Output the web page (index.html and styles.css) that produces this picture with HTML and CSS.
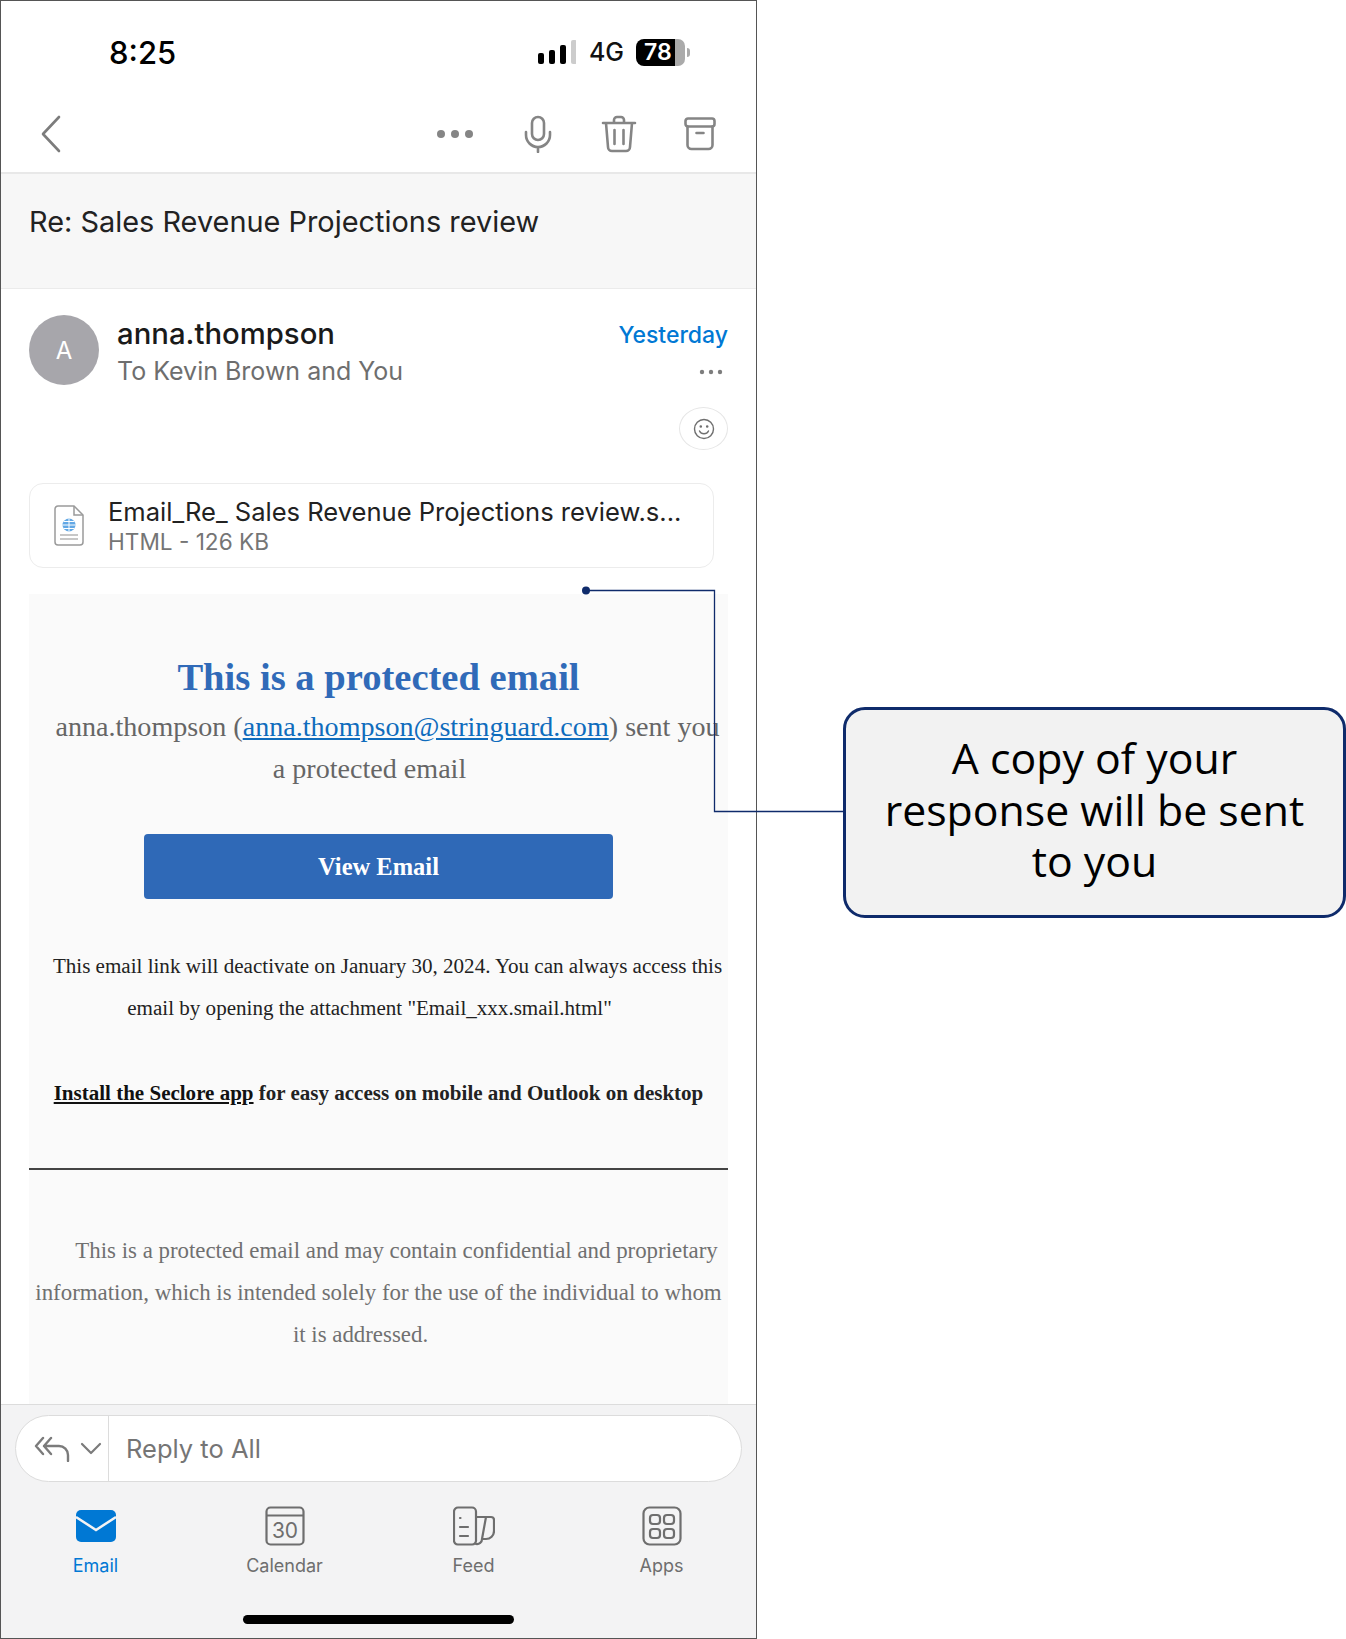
FILE: index.html
```html
<!DOCTYPE html>
<html lang="en">

<head>
  <meta charset="utf-8">
  <meta content="width=device-width, initial-scale=1.0" name="viewport">
  <title>Re: Sales Revenue Projections review</title>
  <link rel="stylesheet" href="styles.css">
</head>

<body>

  <div class="page">

    <!-- Phone screenshot -->
    <div class="phone">

      <div class="status-bar">
        <span class="time">8:25</span>
        <div class="status-right">
          <svg class="signal" width="38" height="24" viewBox="0 0 38 24">
            <rect x="0" y="13" width="6" height="11" rx="2" fill="#000"/>
            <rect x="11" y="10" width="6" height="14" rx="2" fill="#000"/>
            <rect x="22" y="5" width="6" height="19" rx="2" fill="#000"/>
            <rect x="33" y="0" width="6" height="24" rx="2" fill="#ccc"/>
          </svg>
          <span class="network">4G</span>
          <div class="battery">
            <span class="battery-level">78</span>
            <span class="battery-rest"></span>
            <span class="battery-nub"></span>
          </div>
        </div>
      </div>

      <div class="toolbar">
        <svg class="back" width="20" height="38" viewBox="0 0 20 38" fill="none" stroke="#7c7c7c" stroke-width="2.6" stroke-linecap="round" stroke-linejoin="round">
          <path d="M18 2 2 19l16 17"/>
        </svg>
        <div class="toolbar-actions">
          <svg width="38" height="10" viewBox="0 0 38 10" fill="#858585">
            <circle cx="5" cy="5" r="4"/><circle cx="19" cy="5" r="4"/><circle cx="33" cy="5" r="4"/>
          </svg>
          <svg width="28" height="38" viewBox="0 0 28 38" fill="none" stroke="#858585" stroke-width="2.6" stroke-linecap="round">
            <rect x="8" y="2" width="12" height="23" rx="6"/>
            <path d="M2 17v3a12 12 0 0 0 24 0v-3M14 32v5"/>
          </svg>
          <svg width="36" height="38" viewBox="0 0 36 38" fill="none" stroke="#858585" stroke-width="2.6" stroke-linecap="round" stroke-linejoin="round">
            <path d="M2 8h32M13 8V5a3 3 0 0 1 3-3h4a3 3 0 0 1 3 3v3M5 8l2 24a4 4 0 0 0 4 4h14a4 4 0 0 0 4-4l2-24M13.500 15v14M22.500 15v14"/>
          </svg>
          <svg width="32" height="34" viewBox="0 0 32 34" fill="none" stroke="#858585" stroke-width="2.6" stroke-linecap="round" stroke-linejoin="round">
            <rect x="1.500" y="1.500" width="29" height="8" rx="2.500"/>
            <path d="M3.500 9.500V28a4 4 0 0 0 4 4h17a4 4 0 0 0 4-4V9.500M12.500 16h7"/>
          </svg>
        </div>
      </div>

      <div class="subject">Re: Sales Revenue Projections review</div>

      <main class="mail">
        <div class="mail-head">
          <div class="avatar">A</div>
          <div class="sender">
            <div class="sender-name">anna.thompson</div>
            <div class="sender-to">To Kevin Brown and You</div>
          </div>
          <div class="mail-meta">
            <span class="mail-date">Yesterday</span>
            <svg class="mail-more" width="24" height="6" viewBox="0 0 24 6" fill="#7d7d7d">
              <circle cx="3" cy="3" r="2.200"/><circle cx="12" cy="3" r="2.200"/><circle cx="21" cy="3" r="2.200"/>
            </svg>
          </div>
        </div>

        <div class="react-row">
          <div class="react-btn">
            <svg width="22" height="22" viewBox="0 0 22 22" fill="none" stroke="#6f6f6f" stroke-width="1.400" stroke-linecap="round">
              <circle cx="11" cy="11" r="9.500"/>
              <path d="M6.500 13a5 5 0 0 0 9 0"/>
              <circle cx="7.800" cy="8.500" r=".6" fill="#6f6f6f"/><circle cx="14.200" cy="8.500" r=".6" fill="#6f6f6f"/>
            </svg>
          </div>
        </div>

        <div class="attachment">
          <svg width="30" height="42" viewBox="0 0 30 42" fill="none">
            <path d="M4 1h16l9 9v27a3 3 0 0 1-3 3H4a3 3 0 0 1-3-3V4a3 3 0 0 1 3-3z" stroke="#9a9a9a" stroke-width="1.500" fill="#fff"/>
            <path d="M20 1v9h9" stroke="#9a9a9a" stroke-width="1.500"/>
            <circle cx="15" cy="20" r="6.500" fill="#62a8e5"/>
            <path d="M8.500 20h13M15 13.500v13M10 16.500h10M10 23.500h10" stroke="#fff" stroke-width="1"/>
            <path d="M6 30h18M6 34h18" stroke="#b5b5b5" stroke-width="1.500"/>
          </svg>
          <div class="attachment-text">
            <div class="attachment-name">Email_Re_ Sales Revenue Projections review.s...</div>
            <div class="attachment-size">HTML - 126 KB</div>
          </div>
        </div>

        <div class="mail-body">
          <h1>This is a protected email</h1>
          <p class="intro"><span class="gap"></span>anna.thompson (<a href="#mail">anna.thompson@stringuard.com</a>) sent you<br>a protected email<span class="gap"></span></p>
          <a class="view-btn" href="#view">View Email</a>
          <p class="notice"><span class="gap"></span>This email link will deactivate on January 30, 2024. You can always access this<br>email by opening the attachment "Email_xxx.smail.html"<span class="gap"></span></p>
          <p class="install"><a href="#install">Install the Seclore app</a> for easy access on mobile and Outlook on desktop</p>
          <hr>
          <p class="legal"><span class="gap-lg"></span>This is a protected email and may contain confidential and proprietary<br>information, which is intended solely for the use of the individual to whom<br>it is addressed.<span class="gap-lg"></span></p>
        </div>
      </main>

      <div class="bottom">
        <div class="reply">
          <div class="reply-actions">
            <svg width="36" height="26" viewBox="0 0 36 26" fill="none" stroke="#7b7b7b" stroke-width="2.400" stroke-linecap="round" stroke-linejoin="round">
              <path d="M9 2 2 10l7 8M17 2l-7 8 7 8M10 10h15a9 9 0 0 1 9 9v6"/>
            </svg>
            <svg width="22" height="13" viewBox="0 0 22 13" fill="none" stroke="#7b7b7b" stroke-width="2.200" stroke-linecap="round" stroke-linejoin="round">
              <path d="m2 2 9 9 9-9"/>
            </svg>
          </div>
          <span class="reply-label">Reply to All</span>
        </div>

        <nav class="tabs">
          <div class="tab tab-active">
            <svg width="40" height="40" viewBox="0 0 40 40">
              <path d="M5 4h30a5 5 0 0 1 5 5v22a5 5 0 0 1-5 5H5a5 5 0 0 1-5-5V9a5 5 0 0 1 5-5z" fill="#0078d4"/>
              <path d="m0 11 20 13 20-13" fill="none" stroke="#f3f3f4" stroke-width="2.500"/>
            </svg>
            <span>Email</span>
          </div>
          <div class="tab">
            <svg width="40" height="40" viewBox="0 0 40 40" fill="none" stroke="#6e6e6e" stroke-width="2.200">
              <rect x="1.500" y="1.500" width="37" height="37" rx="4"/>
              <path d="M1.500 9.500h37"/>
              <text x="20" y="32" text-anchor="middle" class="cal-num">30</text>
            </svg>
            <span>Calendar</span>
          </div>
          <div class="tab">
            <svg width="42" height="40" viewBox="0 0 42 40" fill="none" stroke="#6e6e6e" stroke-width="2.200" stroke-linecap="round" stroke-linejoin="round">
              <path d="M5 1.500h14a4 4 0 0 1 4 4V34a4 4 0 0 1-4 4.500H5A4 4 0 0 1 1 34V5.500a4 4 0 0 1 4-4zM23 11h15a3 3 0 0 1 3 3v11a8 8 0 0 1-8 8h-4M33 11l-4 22a5 5 0 0 1-6 5"/>
              <path d="M7 12h.5M7 21h8M7 30h8"/>
            </svg>
            <span>Feed</span>
          </div>
          <div class="tab">
            <svg width="40" height="40" viewBox="0 0 40 40" fill="none" stroke="#6e6e6e" stroke-width="2.200">
              <rect x="1.500" y="1.500" width="37" height="37" rx="6"/>
              <rect x="8" y="9" width="10" height="9" rx="3"/><rect x="22" y="9" width="10" height="9" rx="3"/>
              <rect x="8" y="23" width="10" height="9" rx="3"/><rect x="22" y="23" width="10" height="9" rx="3"/>
            </svg>
            <span>Apps</span>
          </div>
        </nav>

        <div class="home-bar"></div>
      </div>
    </div><!-- End phone -->

    <div class="callout">A copy of your<br>response will be sent<br>to you</div>

    <!-- Leader line from the callout to the mail body -->
    <svg class="leader" width="270" height="240" viewBox="0 0 270 240" fill="none">
      <path d="M10 6.500h128.500v221H268" stroke="#0f2b6b" stroke-width="1.300"/>
      <circle cx="10" cy="6.500" r="4" fill="#0f2b6b"/>
    </svg>
  </div>

</body>

</html>
```

FILE: styles.css
```css
* {
  box-sizing: border-box;
}

body {
  margin: 0;
  background-color: #fff;
  font-family: 'Inter', sans-serif;
  color: #1f1f1f;
}

.page {
  position: relative;
  display: flex;
  align-items: flex-start;
  width: 1346px;
  height: 1639px;
  overflow: hidden;
}

.phone {
  display: flex;
  flex-direction: column;
  width: 757px;
  height: 1639px;
  border: 1px solid #555;
  flex-shrink: 0;
}

/* status bar */
.status-bar {
  display: flex;
  justify-content: space-between;
  align-items: center;
  height: 100px;
  padding: 2px 66px 0 108px;
}

.time {
  font-size: 31px;
  font-weight: 500;
  color: #000;
}

.status-right {
  display: flex;
  align-items: center;
}

.signal {
  margin-right: 13px;
}

.network {
  font-size: 25px;
  font-weight: 500;
  color: #111;
  margin-right: 12px;
}

.battery {
  display: flex;
  align-items: center;
  height: 27px;
}

.battery-level {
  display: block;
  width: 39px;
  height: 27px;
  padding-left: 8px;
  background-color: #000;
  color: #fff;
  font-size: 23px;
  font-weight: 600;
  line-height: 27px;
  border-radius: 8px 0 0 8px;
}

.battery-rest {
  width: 10px;
  height: 27px;
  background-color: #aaa;
  border-radius: 0 7px 7px 0;
}

.battery-nub {
  width: 3px;
  height: 9px;
  margin-left: 2px;
  background-color: #aaa;
  border-radius: 0 3px 3px 0;
}

/* toolbar */
.toolbar {
  display: flex;
  justify-content: space-between;
  align-items: center;
  height: 73px;
  padding: 0 40px 5px 40px;
  border-bottom: 2px solid #e8e8e8;
}

.toolbar-actions {
  display: flex;
  align-items: center;
  gap: 50px;
}

.toolbar-actions svg:nth-child(3) {
  margin-left: -1px;
}

.toolbar-actions svg:last-child {
  margin-left: -3px;
}

.subject {
  height: 115px;
  padding: 31px 28px 0;
  background-color: #f7f7f7;
  border-bottom: 1px solid #ebebeb;
  font-size: 28.900px;
  line-height: 34px;
  color: #222;
  white-space: nowrap;
}

/* mail */
.mail {
  flex: 1;
  min-height: 0;
  overflow: hidden;
  padding: 26px 28px 0;
}

.mail-head {
  display: flex;
  height: 92px;
}

.avatar {
  display: flex;
  justify-content: center;
  align-items: center;
  width: 70px;
  height: 70px;
  margin-right: 18px;
  background-color: #a7a6ab;
  border-radius: 50%;
  color: #fff;
  font-size: 24px;
}

.sender {
  flex: 1;
}

.sender-name {
  font-size: 29.300px;
  font-weight: 500;
  line-height: 38px;
  color: #1a1a1a;
}

.sender-to {
  font-size: 25px;
  line-height: 36px;
  color: #6e6e6e;
}

.mail-meta {
  display: flex;
  flex-direction: column;
  align-items: flex-end;
}

.mail-date {
  font-size: 23px;
  font-weight: 500;
  line-height: 38px;
  margin-top: 1px;
  color: #0078d4;
}

.mail-more {
  margin: 15px 5px 0 0;
}

.react-row {
  display: flex;
  justify-content: flex-end;
  height: 76px;
}

.react-btn {
  display: flex;
  justify-content: center;
  align-items: center;
  width: 49px;
  height: 43px;
  border: 1px solid #e6e6e6;
  border-radius: 50%;
}

.attachment {
  display: flex;
  align-items: center;
  gap: 24px;
  width: 685px;
  height: 85px;
  padding-left: 24px;
  border: 1px solid #ececec;
  border-radius: 14px;
}

.attachment-text {
  padding-top: 2px;
}

.attachment-name {
  font-size: 25.550px;
  line-height: 30px;
  color: #222;
  white-space: nowrap;
}

.attachment-size {
  font-size: 22.600px;
  line-height: 29px;
  color: #757575;
}

.mail-body {
  margin-top: 26px;
  height: 815px;
  padding-top: 59px;
  background-color: #fafafa;
  font-family: 'Liberation Serif', serif;
  text-align: center;
  white-space: nowrap;
}

.mail-body h1 {
  margin: 0;
  font-size: 38.600px;
  line-height: 48px;
  font-weight: bold;
  color: #306ab8;
}

.intro {
  margin: 5px 0 0;
  font-size: 28.100px;
  line-height: 42px;
  color: #666;
}

.intro a {
  color: #0f6cbd;
}

.gap {
  display: inline-block;
  width: 18px;
}

.gap-lg {
  display: inline-block;
  width: 36px;
}

.view-btn {
  display: block;
  width: 469px;
  height: 65px;
  margin: 44px auto 0;
  background-color: #2f69b7;
  border-radius: 4px;
  color: #fff;
  font-size: 24.500px;
  font-weight: bold;
  line-height: 65px;
  text-decoration: none;
}

.notice {
  margin: 46px 0 0;
  font-size: 21.070px;
  line-height: 42px;
  color: #222;
}

.install {
  margin: 43px 0 0;
  font-size: 21.030px;
  line-height: 42px;
  font-weight: bold;
  color: #222;
}

.install a {
  color: #111;
}

.mail-body hr {
  height: 2px;
  margin: 54px 0 0;
  border: 0;
  background-color: #444;
}

.legal {
  margin: 60px 0 0;
  font-size: 22.860px;
  line-height: 42px;
  color: #707070;
}

/* reply box and tabs */
.bottom {
  height: 234px;
  padding-top: 10px;
  background-color: #f3f3f4;
  border-top: 1px solid #dcdcdc;
}

.reply {
  display: flex;
  align-items: center;
  width: 727px;
  height: 67px;
  margin-left: 14px;
  background-color: #fff;
  border: 1px solid #dcdcdc;
  border-radius: 34px;
}

.reply-actions {
  display: flex;
  align-items: center;
  gap: 10px;
  width: 93px;
  height: 100%;
  padding-left: 18px;
  border-right: 1px solid #dcdcdc;
}

.reply-label {
  margin-left: 17px;
  font-size: 25.500px;
  color: #757575;
}

.tabs {
  display: grid;
  grid-template-columns: repeat(4, 189px);
  margin-top: 24px;
}

.tab {
  display: flex;
  flex-direction: column;
  align-items: center;
  gap: 8px;
  font-size: 18px;
  line-height: 24px;
  color: #6e6e6e;
}

.tab:last-child {
  margin-left: -2px;
}

.tab-active {
  color: #0078d4;
}

.cal-num {
  font-family: 'Inter', sans-serif;
  font-size: 21px;
  fill: #6e6e6e;
  stroke: none;
}

.home-bar {
  width: 271px;
  height: 9px;
  margin: 37px auto 0;
  background-color: #000;
  border-radius: 5px;
}

/* callout */
.callout {
  width: 503px;
  height: 211px;
  margin: 707px 0 0 86px;
  padding-top: 22px;
  background-color: #f2f2f2;
  border: 3px solid #0f2b6b;
  border-radius: 22px;
  font-family: 'Open Sans', sans-serif;
  font-size: 42.800px;
  line-height: 51.500px;
  text-align: center;
  color: #000;
  white-space: nowrap;
}

.leader {
  position: absolute;
  left: 576px;
  top: 584px;
}
```
